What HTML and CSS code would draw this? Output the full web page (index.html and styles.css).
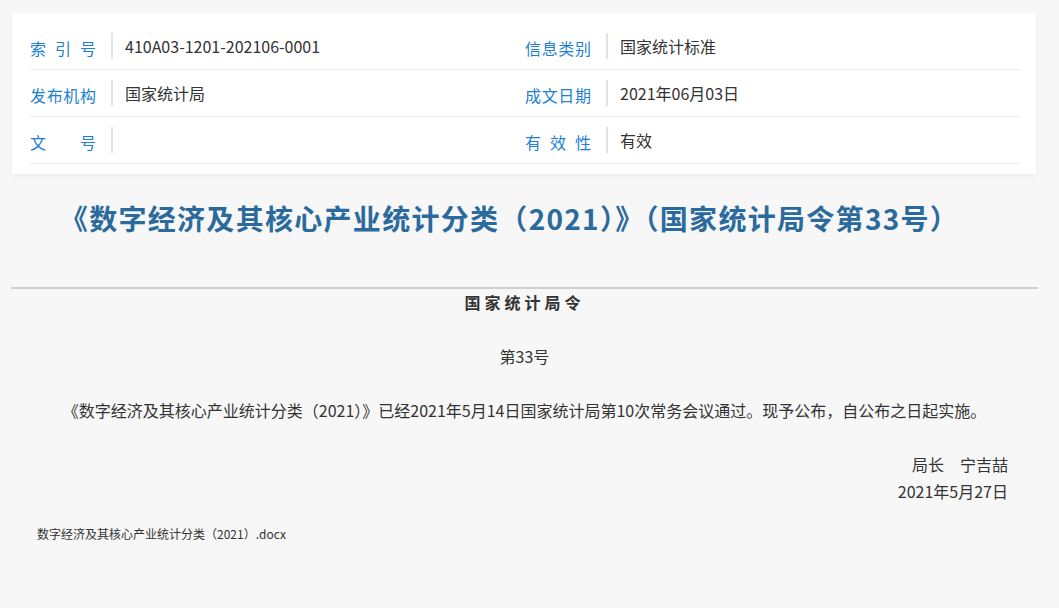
FILE: index.html
```html
<!DOCTYPE html>
<html lang="zh-CN">
<head>
<meta charset="UTF-8">
<title>数字经济及其核心产业统计分类（2021）</title>
<link rel="stylesheet" href="styles.css">
</head>
<body>

<!-- ===== INFO TABLE ===== -->
<div class="infoCard">
  <div class="infoRow">
    <div class="cell"><span class="label">索引号</span><span class="value">410A03-1201-202106-0001</span></div>
    <div class="cell"><span class="label">信息类别</span><span class="value">国家统计标准</span></div>
  </div>
  <div class="infoRow">
    <div class="cell"><span class="label">发布机构</span><span class="value">国家统计局</span></div>
    <div class="cell"><span class="label">成文日期</span><span class="value">2021年06月03日</span></div>
  </div>
  <div class="infoRow">
    <div class="cell"><span class="label">文号</span><span class="value"></span></div>
    <div class="cell"><span class="label">有效性</span><span class="value">有效</span></div>
  </div>
</div>

<!-- ===== ARTICLE ===== -->
<div class="article">
  <h1 class="title">《数字经济及其核心产业统计分类（2021）》（国家统计局令第33号）</h1>
  <div class="rule"></div>

  <div class="content">
    <p class="orderName">国家统计局令</p>
    <p class="center">第33号</p>
    <p class="center">《数字经济及其核心产业统计分类（2021）》已经2021年5月14日国家统计局第10次常务会议通过。现予公布，自公布之日起实施。</p>
    <div class="sign">
      <p>局长　宁吉喆</p>
      <p>2021年5月27日</p>
    </div>
  </div>

  <div class="attach">数字经济及其核心产业统计分类（2021）.docx</div>
</div>

</body>
</html>
```

FILE: styles.css
```css
body {
  margin: 0;
  font-family: "Noto Sans CJK SC", "Noto Sans", sans-serif;
  background: #f7f7f7;
  color: #333;
}

/* ===== INFO TABLE ===== */
.infoCard {
  width: 990px;
  margin: 13px 0 0 12px;
  padding: 10px 16px 10px 18px;
  background: #fff;
  box-shadow: 0 2px 6px rgba(0, 0, 0, 0.05);
}

.infoRow {
  display: grid;
  grid-template-columns: 495px 1fr;
  height: 46px;
  border-bottom: 1px solid #ececec;
}

.cell {
  display: flex;
  align-items: center;
}

.label {
  width: 66px;
  color: #1e7fd3;
  font-size: 16px;
  text-align: justify;
  text-align-last: justify;
  padding-top: 3px;
}

.value {
  margin-left: 15px;
  padding-left: 12px;
  border-left: 2px solid #e2e2e2;
  height: 26px;
  line-height: 26px;
  font-size: 16px;
  color: #333;
}

/* ===== ARTICLE ===== */
.article {
  width: 1027px;
  margin-left: 11px;
}

.title {
  margin: 20px 0 0;
  padding-right: 30px;
  font-size: 28px;
  line-height: 48px;
  font-weight: bold;
  letter-spacing: 1.3px;
  color: #2b6a9c;
  text-align: center;
}

.rule {
  height: 2px;
  margin-top: 45px;
  background: #cfcfcf;
}

.content p {
  margin: 0;
  font-size: 16px;
  line-height: 24px;
}

.orderName {
  margin-top: 1px !important;
  font-weight: bold;
  letter-spacing: 4px;
  text-align: center;
}

.center {
  margin-top: 30px !important;
  text-align: center;
}

.sign {
  margin-top: 29px;
  padding-right: 30px;
  text-align: right;
}

.sign p {
  line-height: 27px;
}

.attach {
  margin: 21px 0 0 26px;
  font-size: 12px;
  line-height: 16px;
  color: #333;
}
```
